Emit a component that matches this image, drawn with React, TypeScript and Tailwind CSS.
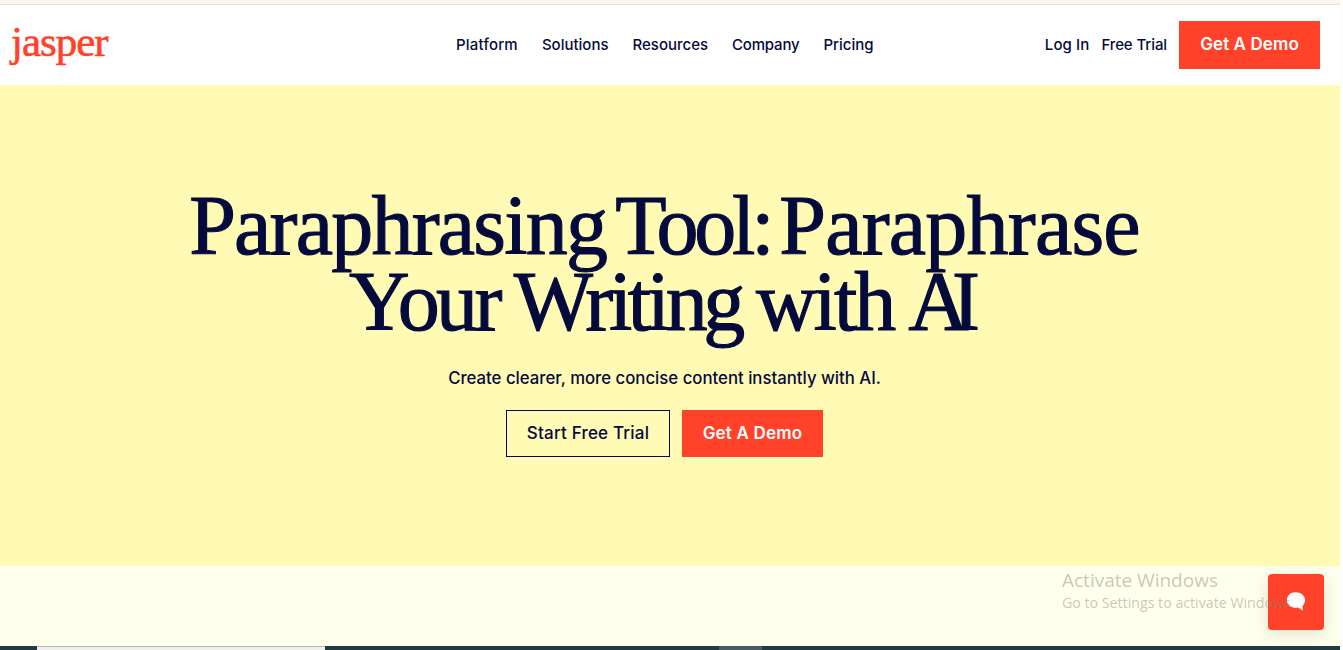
export default function App() {
  const sans = "font-['Inter','Liberation_Sans',sans-serif]";
  return (
    <div className={`relative h-[650px] w-full overflow-hidden bg-[#fdfdfd] ${sans}`}>
      <div className="flex h-full w-[1340px] flex-col">
        <div className="h-[5px] border-b border-[#fadccf] bg-[#fff3ee]" />
        <header className="relative flex h-[80px] items-center justify-between bg-white pl-[11px] pr-5">
          <span className="mb-[8px] font-['Liberation_Serif',serif] text-[43px] leading-none tracking-[-1px] text-[#ff4229] [-webkit-text-stroke:0.6px_#ff4229]">
            jasper
          </span>
          <nav className="absolute left-[456px] flex gap-6 text-[15px] font-medium text-[#050a3d]">
            <a className="tracking-[0.2px]">Platform</a>
            <a>Solutions</a>
            <a>Resources</a>
            <a className="tracking-[-0.2px]">Company</a>
            <a>Pricing</a>
          </nav>
          <div className="flex items-center gap-3 text-[15px] font-medium text-[#050a3d]">
            <a className="tracking-[0.1px]">Log In</a>
            <a className="tracking-[-0.1px]">Free Trial</a>
            <a className="flex h-12 w-[141px] items-center justify-center bg-[#ff4229] text-[17px] font-semibold tracking-[0.1px] text-white">
              Get A Demo
            </a>
          </div>
        </header>
        <section className="flex h-[481px] flex-col items-center bg-[#fffab4] pr-[11px] pt-[103px]">
          <h1 className="text-center font-['Liberation_Serif',serif] text-[84px] leading-[76px] text-[#050a3d] [-webkit-text-stroke:1.1px_#050a3d]">
            <span className="[word-spacing:-12px]">
              <span className="tracking-[-1.8px]">Paraphrasing</span> <span className="tracking-[-4.2px]">Tool:</span>{" "}
              <span className="tracking-[-0.8px]">Paraphrase</span>
            </span>
            <br />
            <span className="[word-spacing:-6px]">
              <span className="tracking-[-3.6px]">Your</span> <span className="tracking-[-4.4px]">Writing</span>{" "}
              <span className="tracking-[-3px]">with</span> <span className="tracking-[-17px]">A</span>I
            </span>
          </h1>
          <p className="mt-[26px] text-[16.75px] font-medium leading-6 text-[#050a3d]">
            Create clearer, more concise content instantly with AI.
          </p>
          <div className="mt-5 flex gap-3">
            <a className="flex h-[47px] w-[164px] items-center justify-center border border-[#050a3d] text-[17px] font-medium tracking-[0.2px] text-[#050a3d]">
              Start Free Trial
            </a>
            <a className="flex h-[47px] w-[141px] items-center justify-center bg-[#ff4229] text-[17px] font-semibold tracking-[0.2px] text-white">
              Get A Demo
            </a>
          </div>
        </section>
        <div className="h-[80px] bg-[#ffffee]" />
        <div className="flex h-1 flex-1 bg-[#233a40]">
          <div className="ml-[37px] h-full w-[288px] border-t border-[#b8b5ae] bg-[#efefef]" />
          <div className="ml-[394px] h-full w-[43px] bg-[#4c5b63]" />
        </div>
      </div>
      <button className="absolute left-[1268px] top-[574px] flex h-14 w-14 items-center justify-center rounded-[4px] bg-[#ff4229] shadow-[0_4px_16px_rgba(0,0,0,0.12)]">
        <svg width="21" height="21" viewBox="0 0 22 22" className="ml-[-1px] mt-[-2px]">
          <path d="M11 1.2c5.6 0 10 3.6 10 8.4 0 2.3-1 4.3-2.6 5.8l.4 5.3-5-3.4c-.9.2-1.8.3-2.8.3-5.2-.2-9-3.4-9-8 0-4.8 3.9-8.4 9-8.4z" fill="#fff" />
        </svg>
      </button>
      <div className="absolute left-[1062px] top-[568px] font-['Open_Sans',sans-serif] text-[rgba(128,128,128,0.45)]">
        <div className="text-[19px] leading-6">Activate Windows</div>
        <div className="text-[14.2px] leading-[22px]">Go to Settings to activate Windows.</div>
      </div>
    </div>
  );
}
